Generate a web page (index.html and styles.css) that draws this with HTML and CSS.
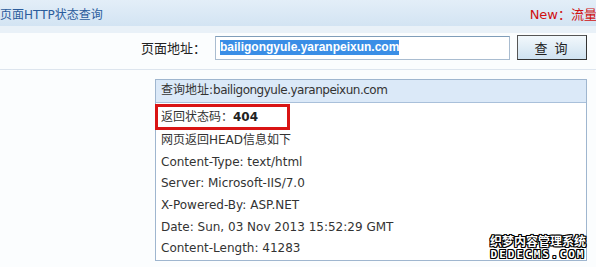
FILE: index.html
```html
<!DOCTYPE html>
<html lang="zh-CN">

<head>
  <meta charset="UTF-8">
  <title>页面HTTP状态查询</title>
  <link rel="stylesheet" href="styles.css">
</head>

<body>
  <div class="topbar">
    <span class="title">页面HTTP状态查询</span>
    <span class="news">New：流量元</span>
  </div>
  <div class="band"></div>

  <div class="form-row">
    <label class="label">页面地址：</label>
    <div class="input"><span class="sel">bailigongyule.yaranpeixun.com</span></div>
    <button class="btn">查 询</button>
  </div>
  <div class="rule"></div>

  <div class="result">
    <div class="result-head">查询地址:<span class="url">bailigongyule.yaranpeixun.com</span></div>
    <div class="row status">返回状态码：<b>404</b></div>
    <div class="row">网页返回HEAD信息如下</div>
    <div class="row">Content-Type: text/html</div>
    <div class="row">Server: Microsoft-IIS/7.0</div>
    <div class="row">X-Powered-By: ASP.NET</div>
    <div class="row">Date: Sun, 03 Nov 2013 15:52:29 GMT</div>
    <div class="row">Content-Length: 41283</div>
  </div>

  <!-- 右下角水印 -->
  <div class="mark">
    <div class="mark-cn">织梦内容管理系统</div>
    <div class="mark-en">DEDECMS.COM</div>
  </div>
</body>

</html>
```

FILE: styles.css
```css
body {
  margin: 0;
  width: 596px;
  height: 267px;
  overflow: hidden;
  position: relative;
  background-color: #fbfdfe;
  font-family: "DejaVu Sans", Verdana, "Noto Sans CJK SC", sans-serif;
  font-size: 12px;
  color: #333;
}

.topbar {
  height: 26px;
  display: flex;
  justify-content: space-between;
  align-items: center;
  background: linear-gradient(#e3eef8, #d3e4f3);
  white-space: nowrap;
  overflow: hidden;
}

.title {
  color: #2b5c9c;
  font-size: 12px;
}

.news {
  color: #d01010;
  font-size: 13px;
  margin-right: -14px;
}

.band {
  height: 7px;
  background-color: #e9f1f8;
}

.form-row {
  display: flex;
  align-items: center;
  height: 27px;
  padding-top: 1px;
}

.label {
  width: 206px;
  text-align: right;
  padding-right: 9px;
  font-size: 13px;
  color: #222;
  font-family: "Noto Sans CJK SC", sans-serif;
}

.input {
  width: 289px;
  height: 22px;
  border: 1px solid #a9bcd0;
  border-top-color: #7f9db9;
  background: #fff;
  display: flex;
  align-items: center;
  padding-left: 4px;
}

.sel {
  background-color: #3a8ee6;
  color: #fff;
  font-weight: bold;
  font-family: "Liberation Sans", Arial, sans-serif;
  font-size: 12px;
  line-height: 15px;
}

.btn {
  margin-left: 7px;
  width: 70px;
  height: 25px;
  border: 1px solid #555;
  border-right-color: #333;
  border-bottom-color: #333;
  background: linear-gradient(#f2f8fc, #cfe2f0);
  font-family: "Noto Sans CJK SC", sans-serif;
  font-size: 13px;
  letter-spacing: 2px;
  color: #222;
  padding: 0;
}

.rule {
  margin-top: 8px;
  height: 1px;
  background-color: #dde5ee;
}

.result {
  margin: 9px 0 0 155px;
  width: 430px;
  border: 1px solid #9fb6cf;
  background-color: #fff;
}

.result-head {
  height: 22px;
  line-height: 21px;
  padding-left: 5px;
  background-color: #dbe9f8;
  border-bottom: 1px solid #a9c0da;
  color: #333;
}

.result-head .url {
  letter-spacing: -0.5px;
}

.row {
  height: 21.7px;
  line-height: 21px;
  padding-left: 5px;
  white-space: nowrap;
}

.status {
  width: 126px;
  height: 20px;
  margin-top: 1px;
  border: 3px solid #d91414;
  padding-left: 3px;
  line-height: 20px;
  margin-left: -1px;
}

.status b {
  color: #222;
}

.mark {
  position: absolute;
  right: 10px;
  bottom: 5px;
  text-align: center;
  color: #fff;
  font-weight: bold;
  text-shadow: -1px 0 #000, 1px 0 #000, 0 -1px #000, 0 1px #000, 1px 1px #000, -1px -1px #000, 1px -1px #000, -1px 1px #000;
}

.mark-cn {
  font-family: "Noto Sans CJK SC", sans-serif;
  font-size: 12px;
  line-height: 15px;
}

.mark-en {
  font-family: "DejaVu Sans Mono", monospace;
  font-size: 11px;
  line-height: 14px;
  letter-spacing: 2px;
}
```
